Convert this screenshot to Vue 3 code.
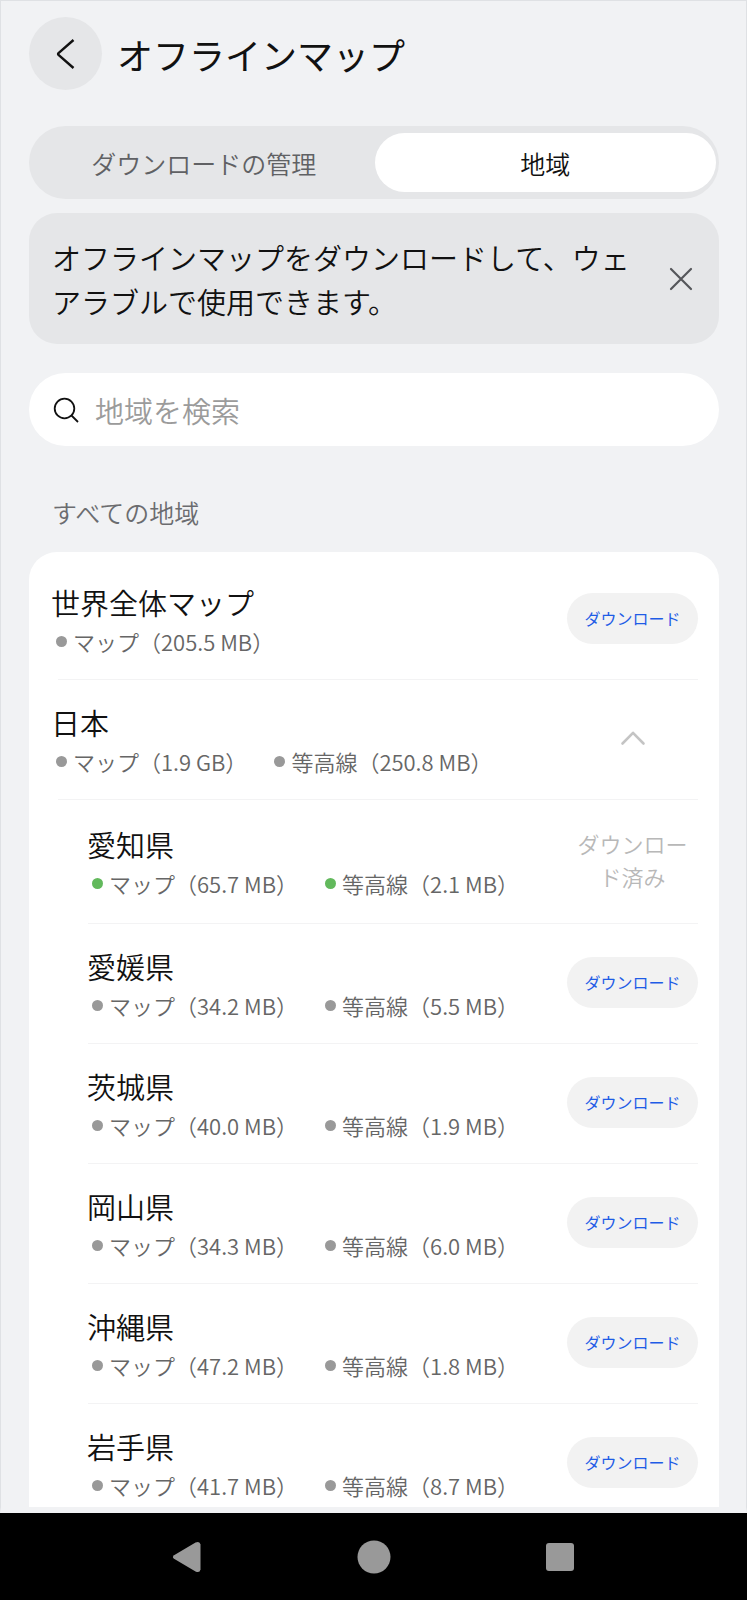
<script setup>
import { ref } from 'vue'

const tab = ref('regions')
const noticeOpen = ref(true)
const query = ref('')

const regions = [
  { name: '世界全体マップ', map: '205.5 MB', action: 'download' },
  { name: '日本', map: '1.9 GB', contour: '250.8 MB', action: 'collapse' },
  { name: '愛知県', map: '65.7 MB', contour: '2.1 MB', action: 'done', child: true },
  { name: '愛媛県', map: '34.2 MB', contour: '5.5 MB', action: 'download', child: true },
  { name: '茨城県', map: '40.0 MB', contour: '1.9 MB', action: 'download', child: true },
  { name: '岡山県', map: '34.3 MB', contour: '6.0 MB', action: 'download', child: true },
  { name: '沖縄県', map: '47.2 MB', contour: '1.8 MB', action: 'download', child: true },
  { name: '岩手県', map: '41.7 MB', contour: '8.7 MB', action: 'download', child: true },
]
</script>

<template>
  <div class="screen">
    <main class="page">
      <header class="header">
        <button class="back" type="button" aria-label="戻る">
          <svg width="32" height="32" viewBox="0 0 32 32" fill="none" stroke="#111" stroke-width="2.4" stroke-linejoin="round">
            <path d="M23.5 2 8.5 15.2Q7.6 16 8.5 16.8L23.5 30" />
          </svg>
        </button>
        <h1 class="title">オフラインマップ</h1>
      </header>

      <div class="tabs" role="tablist">
        <button class="tab" :class="{ active: tab === 'manage' }" type="button" role="tab" :aria-selected="tab === 'manage'" @click="tab = 'manage'">ダウンロードの管理</button>
        <button class="tab" :class="{ active: tab === 'regions' }" type="button" role="tab" :aria-selected="tab === 'regions'" @click="tab = 'regions'">地域</button>
      </div>

      <section v-if="noticeOpen" class="notice">
        <p class="notice-text">オフラインマップをダウンロードして、ウェアラブルで使用できます。</p>
        <button class="close" type="button" aria-label="閉じる" @click="noticeOpen = false">
          <svg width="24" height="24" viewBox="0 0 24 24" fill="none" stroke="#55565a" stroke-width="2.2" stroke-linecap="round">
            <path d="M2 2 22 22M22 2 2 22" />
          </svg>
        </button>
      </section>

      <label class="search">
        <svg width="26" height="26" viewBox="0 0 26 26" fill="none" stroke="#111" stroke-width="1.8">
          <circle cx="11.5" cy="11.5" r="9.8" />
          <path d="M18.5 18.5 25 25" />
        </svg>
        <input v-model="query" class="search-input" type="text" placeholder="地域を検索" aria-label="地域を検索" />
      </label>

      <h2 class="section">すべての地域</h2>

      <ul class="card">
        <li v-for="r in regions" :key="r.name" class="row" :class="{ child: r.child }">
          <div class="info">
            <div class="name">{{ r.name }}</div>
            <div class="meta">
              <span class="item"><i class="dot" :class="{ on: r.action === 'done' }"></i>マップ（{{ r.map }}）</span>
              <span v-if="r.contour" class="item"><i class="dot" :class="{ on: r.action === 'done' }"></i>等高線（{{ r.contour }}）</span>
            </div>
          </div>
          <button v-if="r.action === 'download'" class="download" type="button">ダウンロード</button>
          <button v-else-if="r.action === 'collapse'" class="collapse" type="button" aria-label="折りたたむ">
            <svg width="26" height="16" viewBox="0 0 26 16" fill="none" stroke="#c4c4c4" stroke-width="2.6" stroke-linecap="round" stroke-linejoin="round">
              <path d="M2.5 13.5 13 2.8 23.5 13.5" />
            </svg>
          </button>
          <span v-else class="done">ダウンロード済み</span>
        </li>
      </ul>
    </main>

    <nav class="system">
      <button type="button" aria-label="戻る">
        <svg width="34" height="34" viewBox="0 0 34 34" fill="#999">
          <path d="M4 15.200 25.500 2.500Q29.800 .6 30.500 4.500V29.500Q29.800 33.400 25.500 31.500L4 18.800Q1.800 17 4 15.200Z" />
        </svg>
      </button>
      <button type="button" aria-label="ホーム">
        <svg width="34" height="34" viewBox="0 0 34 34" fill="#999"><circle cx="17" cy="17" r="16.500" /></svg>
      </button>
      <button type="button" aria-label="履歴">
        <svg width="34" height="34" viewBox="0 0 34 34" fill="#999"><rect x="3" y="3" width="28" height="28" rx="3" /></svg>
      </button>
    </nav>
  </div>
</template>

<style>
body {
  margin: 0;
  background: #f1f2f4;
}
</style>

<style scoped>
.screen {
  display: flex;
  flex-direction: column;
  height: 100vh;
  box-sizing: border-box;
  font-family: "Noto Sans CJK JP", sans-serif;
  font-weight: 350;
  color: #111;
  background: #f1f2f4;
}
button {
  border: 0;
  padding: 0;
  background: none;
  font-family: inherit;
  font-weight: inherit;
  color: inherit;
  cursor: pointer;
}
svg {
  display: block;
  flex: none;
}
.page {
  flex: 1;
  min-height: 0;
  overflow: hidden;
  display: flex;
  flex-direction: column;
  padding: 16px 27px 0 28px;
  border: 1px solid #dfe1e4;
  border-bottom: 6px solid #f1f2f4;
}
.header {
  flex: none;
  display: flex;
  align-items: center;
  gap: 15px;
}
.back {
  width: 73px;
  height: 73px;
  border-radius: 50%;
  background: #e5e6e8;
  display: grid;
  place-items: center;
}
.title {
  margin: 0;
  font-size: 36px;
  line-height: 52px;
  font-weight: 400;
}
.tabs {
  flex: none;
  margin-top: 36px;
  display: grid;
  grid-template-columns: 1fr 1fr;
  padding: 7px 3px 7px 4px;
  border-radius: 40px;
  background: #e5e6e8;
}
.tab {
  height: 59px;
  border-radius: 30px;
  font-size: 25px;
  color: #606164;
}
.tab.active {
  background: #fff;
  color: #111;
}
.notice {
  flex: none;
  margin-top: 14px;
  display: flex;
  align-items: center;
  justify-content: space-between;
  padding: 22px 26px 21px 23px;
  border-radius: 28px;
  background: #e5e6e8;
}
.notice-text {
  margin: 0;
  max-width: 580px;
  font-size: 29px;
  line-height: 44px;
}
.search {
  flex: none;
  margin-top: 29px;
  height: 73px;
  display: flex;
  align-items: center;
  gap: 16px;
  padding: 0 24px;
  border-radius: 37px;
  background: #fff;
}
.search-input {
  flex: 1;
  min-width: 0;
  border: 0;
  padding: 0;
  outline: 0;
  background: none;
  font-family: inherit;
  font-weight: inherit;
  font-size: 29px;
  color: #111;
}
.search-input::placeholder {
  color: #9b9b9b;
  opacity: 1;
}
.section {
  flex: none;
  margin: 47px 0 21px 23px;
  font-size: 25px;
  line-height: 38px;
  font-weight: inherit;
  color: #6b6c6f;
}
.card {
  flex: none;
  list-style: none;
  margin: 0;
  padding: 8px 21px 28px 22px;
  border-radius: 28px;
  background: #fff;
}
.row {
  position: relative;
  display: flex;
  align-items: center;
  justify-content: space-between;
  padding: 22px 0 26px;
}
.row.child {
  padding-left: 36px;
}
.row::after {
  content: "";
  position: absolute;
  left: 7px;
  right: 0;
  bottom: 0;
  height: 1px;
  background: #f3f3f4;
}
.row.child::after {
  left: 37px;
}
.name {
  font-size: 29px;
  line-height: 40px;
}
.meta {
  margin-top: 6px;
  display: flex;
  gap: 27px;
  padding-left: 5px;
}
.item {
  display: flex;
  align-items: center;
  gap: 6px;
  font-size: 22px;
  line-height: 26px;
  color: #666;
  white-space: nowrap;
}
.dot {
  width: 11px;
  height: 11px;
  border-radius: 50%;
  background: #999;
}
.dot.on {
  background: #62b95c;
}
.download,
.collapse,
.done {
  flex: none;
  width: 131px;
}
.download {
  height: 51px;
  border-radius: 26px;
  background: #f2f2f2;
  font-size: 16px;
  font-weight: 400;
  color: #1f5ce6;
}
.collapse {
  display: grid;
  place-items: center;
}
.done {
  margin: 5px 0;
  font-size: 22px;
  line-height: 33px;
  text-align: center;
  color: #b8b8b8;
}
.system {
  flex: none;
  height: 87px;
  display: grid;
  grid-template-columns: repeat(3, 1fr);
  padding: 0 12.5%;
  background: #000;
}
.system button {
  display: grid;
  place-items: center;
}
</style>
